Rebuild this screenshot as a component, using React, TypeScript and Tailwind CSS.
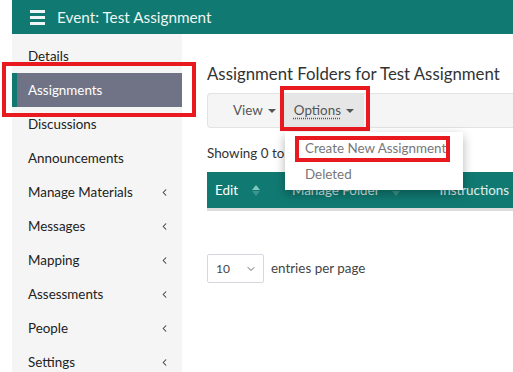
import { ChevronDown, ChevronLeft } from 'lucide-react'

const navItems = [
  { label: 'Details' },
  { label: 'Assignments', active: true },
  { label: 'Discussions' },
  { label: 'Announcements' },
  { label: 'Manage Materials', sub: true },
  { label: 'Messages', sub: true },
  { label: 'Mapping', sub: true },
  { label: 'Assessments', sub: true },
  { label: 'People', sub: true },
  { label: 'Settings', sub: true },
]

const SortIcon = () => (
  <span className="flex flex-col items-center gap-[1px]">
    <span className="h-0 w-0 border-x-[4px] border-b-[5px] border-x-transparent border-b-[#7fc9bf]" />
    <span className="h-0 w-0 border-x-[4px] border-t-[5px] border-x-transparent border-t-[#3d968c]" />
  </span>
)

const Caret = () => (
  <span className="ml-[5px] inline-block h-0 w-0 border-x-[4px] border-t-[4px] border-x-transparent border-t-[#555]" />
)

const App = () => {
  return (
    <div className="relative h-[372px] w-[513px] overflow-hidden bg-white pl-3 font-['Lato',sans-serif] text-[#333]">
      {/* Top bar */}
      <header className="flex h-[34px] items-center bg-[#107a72] pl-[18px] text-[#eef5f4]">
        <span className="flex w-[15px] flex-col gap-[3px]">
          <span className="h-[3px] bg-[#eef5f4]" />
          <span className="h-[3px] bg-[#eef5f4]" />
          <span className="h-[3px] bg-[#eef5f4]" />
        </span>
        <span className="ml-[12px] text-[15.3px]">Event: Test Assignment</span>
      </header>

      <div className="flex h-[338px]">
        {/* Sidebar */}
        <nav className="w-[170px] shrink-0 bg-[#f5f5f5] pt-[5px]">
          {navItems.map((item) =>
            item.active ? (
              <div
                key={item.label}
                className="relative flex h-[34px] items-center border-l-[5px] border-[#107a72] bg-[#6f7385] pl-[11px] text-[13.4px] text-white"
              >
                {item.label}
                {/* annotation */}
                <span className="pointer-events-none absolute -left-[15px] -right-[14px] -top-[11px] -bottom-[10px] border-[4px] border-[#e8191f]" />
              </div>
            ) : (
              <div
                key={item.label}
                className="flex h-[34px] items-center justify-between pl-4 pr-[12px] text-[13.4px] text-[#222]"
              >
                {item.label}
                {item.sub && <ChevronLeft className="h-[11px] w-[11px] text-[#333]" strokeWidth={2.2} />}
              </div>
            )
          )}
        </nav>

        {/* Main */}
        <main className="flex-1 pl-[25px] pt-[28px]">
          <h1 className="whitespace-nowrap text-[16.8px] leading-[24px] text-[#333]">
            Assignment Folders for Test Assignment
          </h1>

          <div className="relative mt-[7px] flex h-[35px] items-stretch rounded-l-[4px] border border-r-0 border-[#e3e3e3] bg-[#f5f5f5] pl-[25px] text-[13.4px] text-[#555]">
            <div className="flex items-center pr-[8px]">
              View
              <Caret />
            </div>
            <div className="relative flex items-center bg-[#e6e6e6] px-[10px]">
              <span className="underline decoration-dotted underline-offset-2">Options</span>
              <Caret />
              <span className="pointer-events-none absolute -left-[4px] -right-[6px] -top-[8px] -bottom-[4px] border-[4px] border-[#e8191f]" />
            </div>

            {/* Dropdown menu */}
            <div className="absolute left-[77px] top-[38px] z-10 w-[178px] bg-white py-[3px] text-[13.4px] text-[#777] shadow-[0_4px_10px_rgba(0,0,0,0.3)]">
              <div className="relative flex h-[26px] items-center pl-[20px]">
                Create New Assignment
                <span className="pointer-events-none absolute left-[10px] right-[13px] top-[1px] bottom-[-1px] border-[4px] border-[#e8191f]" />
              </div>
              <div className="flex h-[26px] items-center pl-[20px]">Deleted</div>
            </div>
          </div>

          <p className="mt-[15px] whitespace-nowrap text-[13.4px] leading-[20px]">Showing 0 to</p>

          <div className="mt-[9px] flex h-[39px] items-center border-b-[3px] border-[#dcdcdc] bg-[#107a72] pl-[8px] text-[13.4px] text-white">
            <span>Edit</span>
            <span className="ml-[14px]">
              <SortIcon />
            </span>
            <span className="ml-[32px] whitespace-nowrap text-[#cfe5e2]">Manage Folder</span>
            <span className="ml-[12px]">
              <SortIcon />
            </span>
            <span className="ml-[40px] whitespace-nowrap text-[#e0eeec]">Instructions</span>
          </div>

          <div className="mt-[43px] flex items-center gap-[7px] text-[13.4px]">
            <div className="flex h-[29px] w-[57px] items-center justify-between rounded-[2px] border border-[#d6d6e0] pl-[8px] pr-[6px] text-[12px] text-[#444]">
              10
              <ChevronDown className="h-[12px] w-[12px] text-[#666]" />
            </div>
            <span className="text-[#444]">entries per page</span>
          </div>
        </main>
      </div>
    </div>
  )
}

export default App
